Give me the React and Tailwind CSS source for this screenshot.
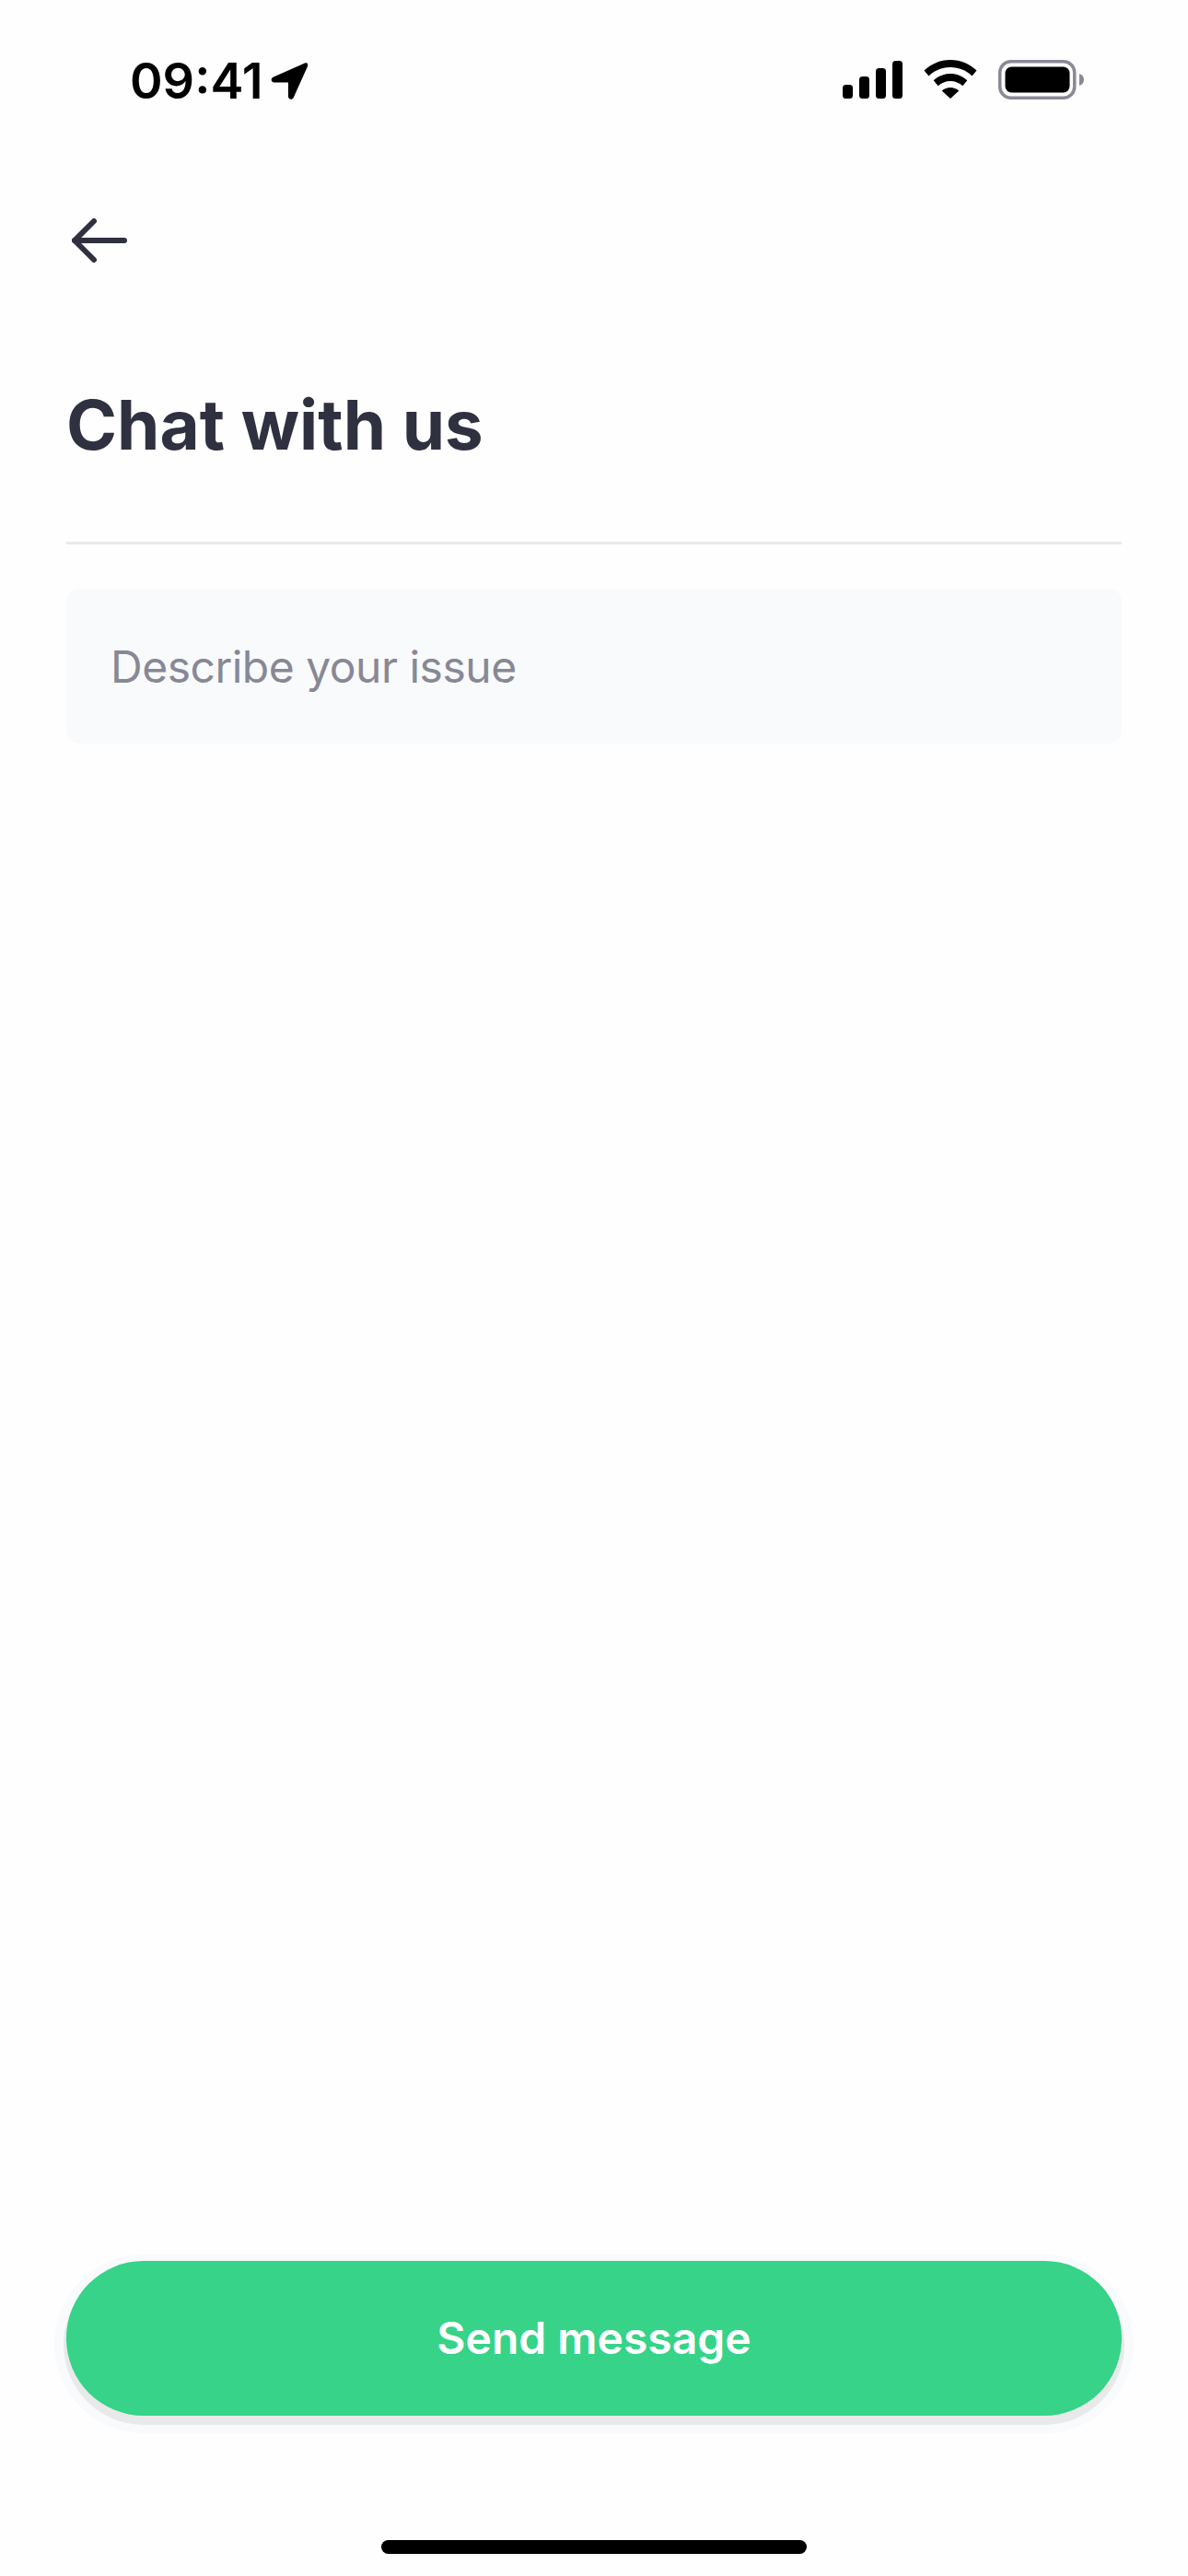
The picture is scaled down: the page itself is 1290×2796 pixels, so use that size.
const font = "font-['Inter',sans-serif]";

function StatusBar() {
  return (
    <div className="flex h-[132px] shrink-0 items-start justify-between pl-[141px] pr-[113px] pt-[60px]">
      <div className="flex items-center gap-[8px]">
        <span className="text-[54px] leading-[56px] font-semibold text-black">09:41</span>
        <svg width="42" height="42" viewBox="0 0 42 42" fill="black">
          <path d="M38 1.500 3.500 16.800c-3 1.400-2 5.700 1.200 5.700H20v15.300c0 3.200 4.300 4.200 5.700 1.200L41 5c1-2.600-.6-4.500-3-3.500z" />
        </svg>
      </div>
      <div className="flex items-start gap-[23px] pt-[5px]">
        <svg width="65" height="42" viewBox="0 0 65 42" fill="black">
          <rect x="0" y="27" width="11" height="15" rx="3.500" />
          <rect x="18" y="18" width="11" height="24" rx="3.500" />
          <rect x="36" y="9" width="11" height="33" rx="3.500" />
          <rect x="54" y="1" width="11" height="41" rx="3.500" />
        </svg>
        <svg width="58" height="42" viewBox="0 0 58 42" fill="black">
          <path d="M29 0c11 0 21 4.300 28.500 11.500l-5 6C46.500 11.500 38 8 29 8S11.500 11.500 5.500 17.500l-5-6C8 4.300 18 0 29 0z" />
          <path d="M29 15c7 0 13.500 2.700 18.300 7.300l-5 6C38.800 25 34 23 29 23s-9.800 2-13.300 5.300l-5-6C15.500 17.700 22 15 29 15z" />
          <path d="M29 30c3.500 0 6.800 1.300 9.300 3.500L29 42l-9.300-8.500c2.500-2.200 5.800-3.500 9.300-3.500z" />
        </svg>
        <svg width="93" height="43" viewBox="0 0 93 43">
          <rect x="1.750" y="1.750" width="81" height="39.500" rx="12" fill="none" stroke="#8a8a96" strokeWidth="3.500" />
          <rect x="7.500" y="7.500" width="70" height="28" rx="7" fill="black" />
          <path d="M88 15c3 .8 5 3.200 5 6.500s-2 5.700-5 6.500z" fill="#8a8a96" />
        </svg>
      </div>
    </div>
  );
}

export default function App() {
  return (
    <div className={`flex h-[2796px] w-[1290px] flex-col bg-[#fefefe] ${font}`}>
      <StatusBar />
      <div className="flex flex-1 flex-col px-[72px]">
        <svg width="60" height="48" viewBox="0 0 60 48" fill="none" stroke="#2f3040" strokeWidth="6" strokeLinecap="round" strokeLinejoin="round" className="mt-[105px] ml-[6px]">
          <path d="M3 24 H57" />
          <path d="M24 3 3 24 24 45" />
        </svg>
        <h1 className="mt-[132px] text-[74.500px] leading-[88px] font-bold text-[#2f3040]">Chat with us</h1>
        <div className="mt-[83px] h-[3px] bg-[#e8eaea]" />
        <div className="mt-[48px] flex h-[168px] items-center rounded-[14px] bg-[#f9fafc] px-[48px]">
          <span className="translate-y-[1px] text-[48px] leading-[56px] tracking-[-0.5px] text-[#888894]">Describe your issue</span>
        </div>
        <div className="mt-auto flex h-[168px] items-center justify-center rounded-full bg-[#36d388] shadow-[0_7px_0_3px_#e8eaea,0_6px_0_13px_#f9fafc]">
          <span className="text-[48px] leading-[56px] font-semibold text-white">Send message</span>
        </div>
        <div className="mt-[135px] mb-[24px] ml-[342px] h-[15px] w-[462px] rounded-full bg-black" />
      </div>
    </div>
  );
}
